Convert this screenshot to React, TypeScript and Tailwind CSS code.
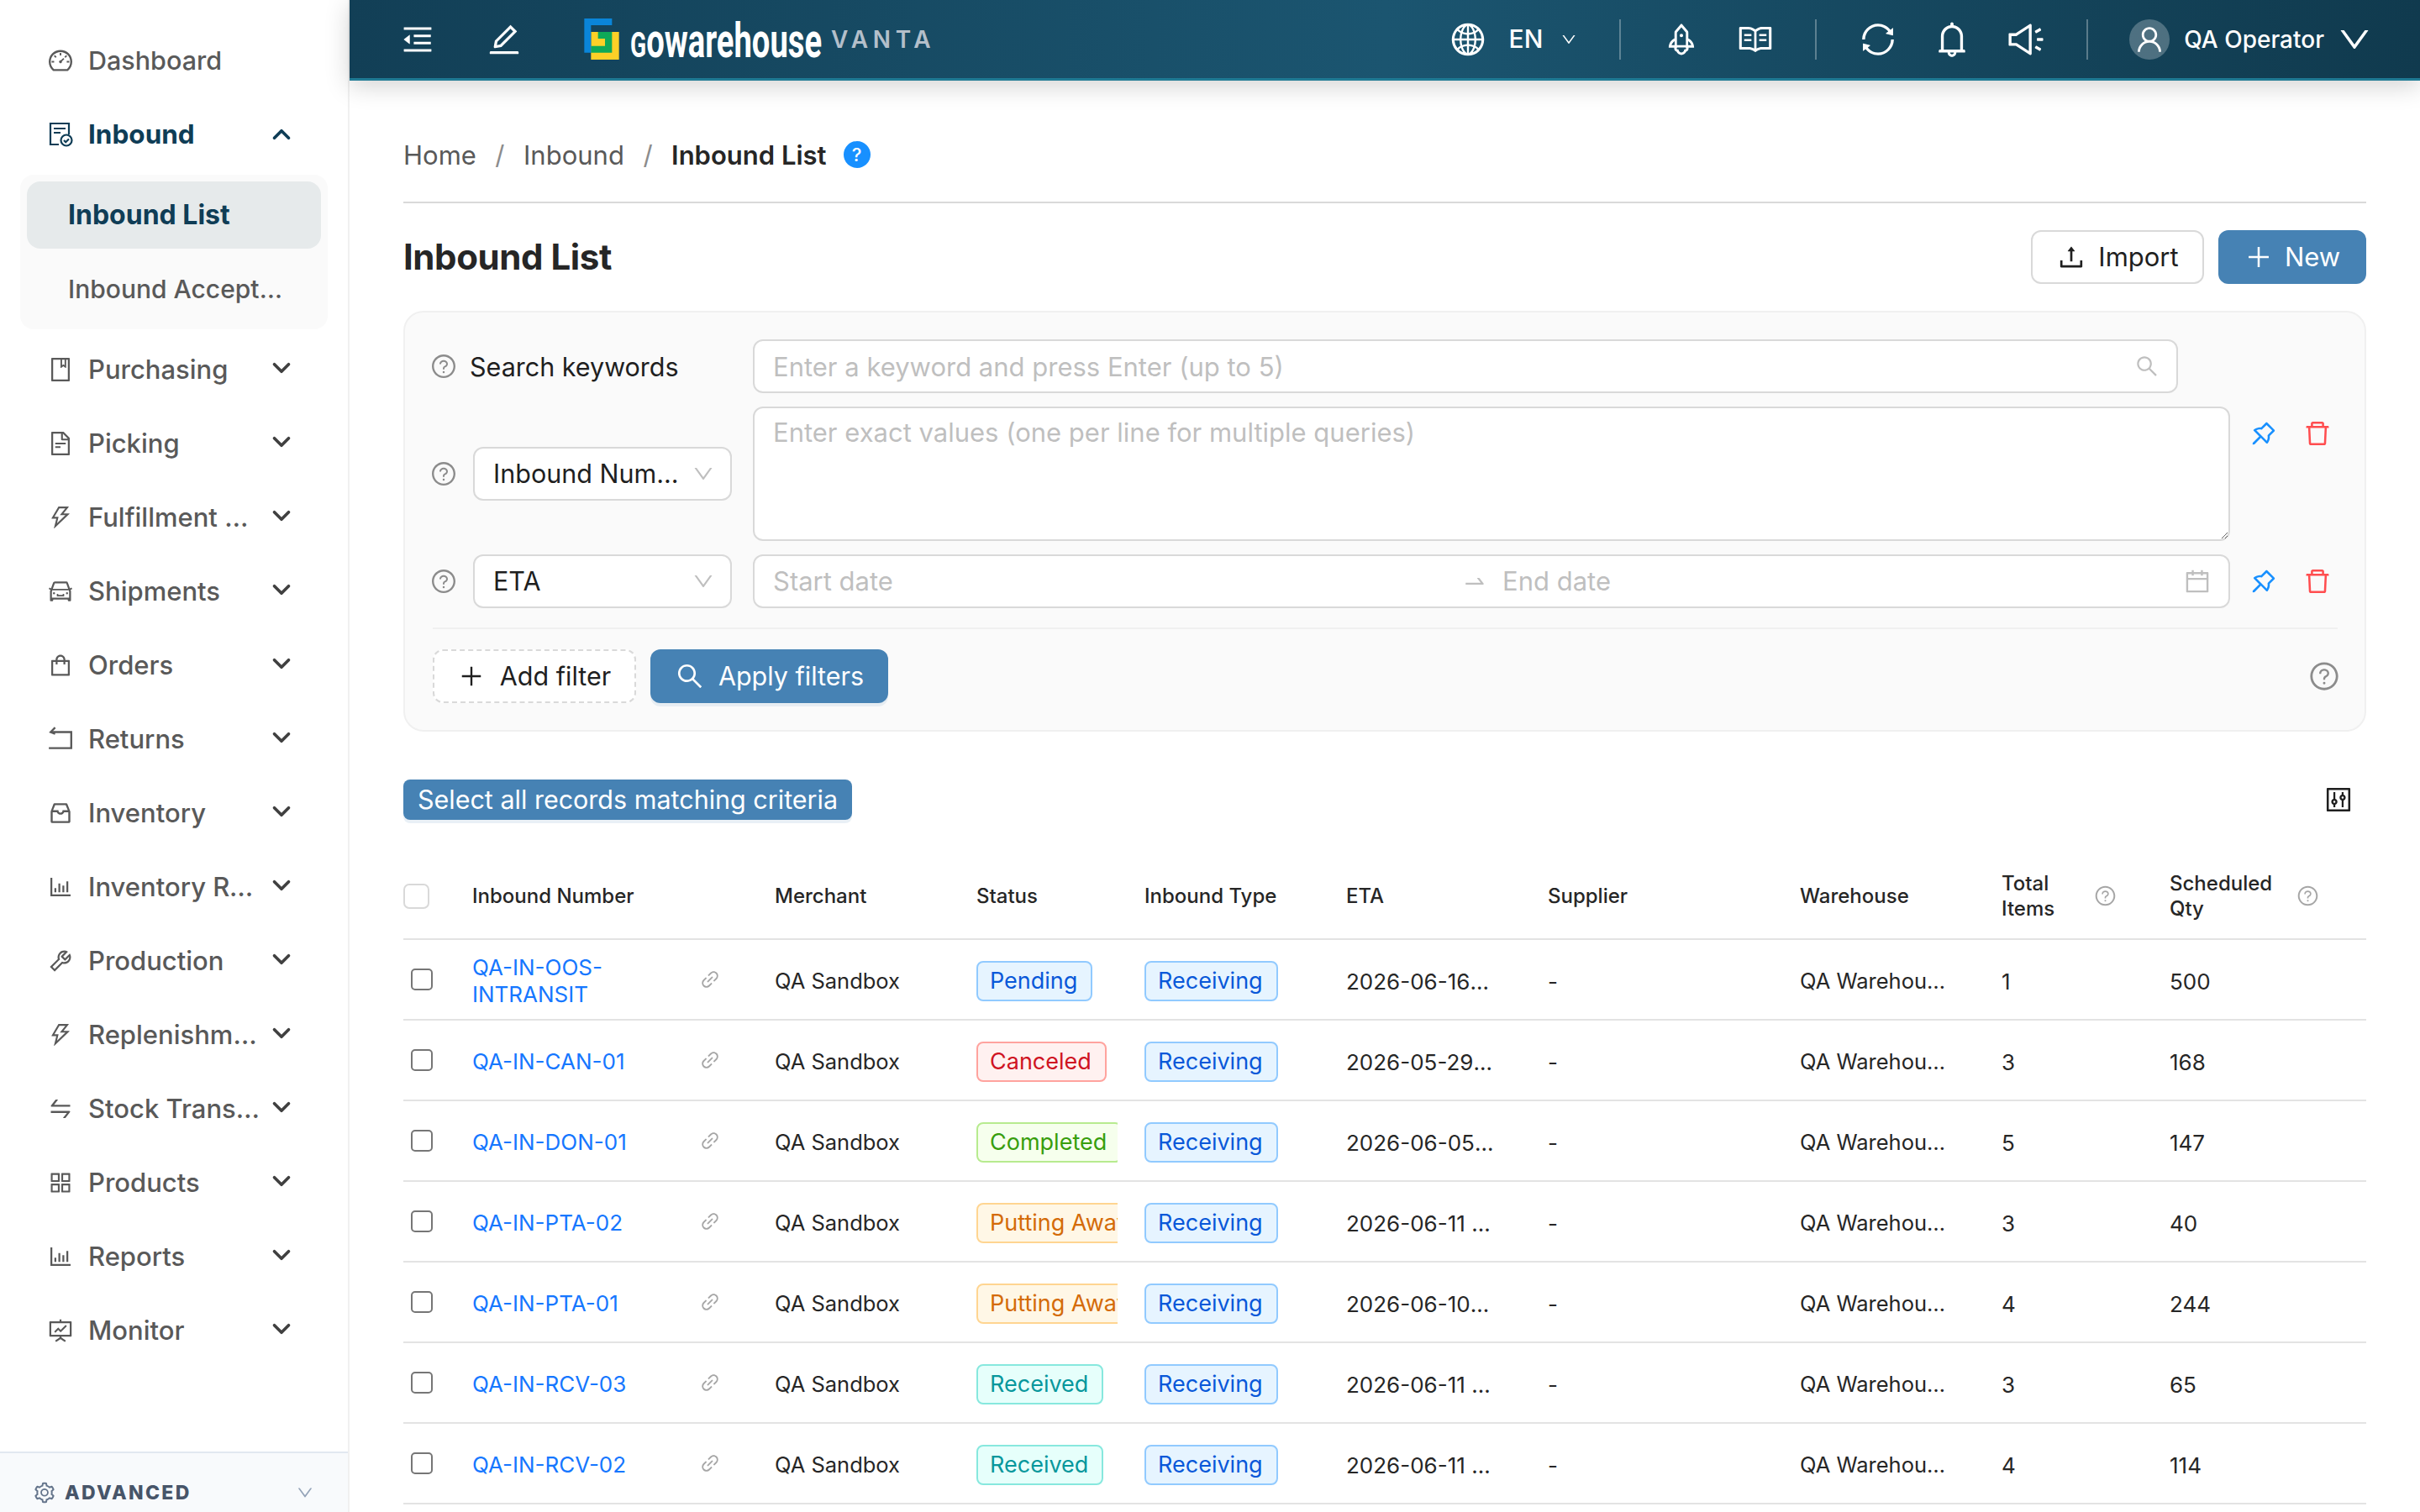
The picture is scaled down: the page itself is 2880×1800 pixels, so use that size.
import type { ComponentType, ReactNode } from "react";
import {
  AiOutlineAppstore,
  AiOutlineBarChart,
  AiOutlineBell,
  AiOutlineBook,
  AiOutlineCalendar,
  AiOutlineCar,
  AiOutlineControl,
  AiOutlineDashboard,
  AiOutlineDelete,
  AiOutlineDown,
  AiOutlineEdit,
  AiOutlineFileText,
  AiOutlineFundProjectionScreen,
  AiOutlineGlobal,
  AiOutlineInbox,
  AiOutlineLink,
  AiOutlineMenuFold,
  AiOutlinePlus,
  AiOutlinePushpin,
  AiOutlineQuestionCircle,
  AiOutlineRead,
  AiOutlineRocket,
  AiOutlineSearch,
  AiOutlineSetting,
  AiOutlineShopping,
  AiOutlineSound,
  AiOutlineSwap,
  AiOutlineSwapRight,
  AiOutlineSync,
  AiOutlineThunderbolt,
  AiOutlineTool,
  AiOutlineUpload,
  AiOutlineUser,
} from "react-icons/ai";
import { ChevronDown, ChevronUp } from "lucide-react";

type IconType = ComponentType<{ size?: number; className?: string }>;

function InboundIcon({ size = 30 }: { size?: number }) {
  return (
    <svg width={size} height={size} viewBox="0 0 30 30" fill="none" stroke="#0f3d56" strokeWidth="2.2">
      <path d="M13 27H3V2H25V15" />
      <path d="M7 8H21M7 13H15" />
      <circle cx="22" cy="22" r="6.5" />
      <path d="M19 22l2.2 2.2L25 20.5" />
    </svg>
  );
}

function ReturnsIcon({ size = 30 }: { size?: number }) {
  return (
    <svg width={size} height={size} viewBox="0 0 30 30" fill="none" stroke="currentColor" strokeWidth="2.2">
      <path d="M5 7H27V25H2" />
      <path d="M9 2L4 7L9 9" />
    </svg>
  );
}

const navItems: { label: string; icon: IconType }[] = [
  { label: "Purchasing", icon: AiOutlineBook },
  { label: "Picking", icon: AiOutlineFileText },
  { label: "Fulfillment Center", icon: AiOutlineThunderbolt },
  { label: "Shipments", icon: AiOutlineCar },
  { label: "Orders", icon: AiOutlineShopping },
  { label: "Returns", icon: ReturnsIcon },
  { label: "Inventory", icon: AiOutlineInbox },
  { label: "Inventory Reports", icon: AiOutlineBarChart },
  { label: "Production", icon: AiOutlineTool },
  { label: "Replenishment", icon: AiOutlineThunderbolt },
  { label: "Stock Transfer", icon: AiOutlineSwap },
  { label: "Products", icon: AiOutlineAppstore },
  { label: "Reports", icon: AiOutlineBarChart },
  { label: "Monitor", icon: AiOutlineFundProjectionScreen },
];

const statusStyles: Record<string, string> = {
  Pending: "border-[#91caff] bg-[#e6f4ff] text-[#0958d9]",
  Canceled: "border-[#ffa39e] bg-[#fff1f0] text-[#cf1322]",
  Completed: "border-[#b7eb8f] bg-[#f6ffed] text-[#389e0d]",
  "Putting Away": "border-[#ffd591] bg-[#fff7e6] text-[#d46b08]",
  Received: "border-[#87e8de] bg-[#e6fffb] text-[#08979c]",
};

const rows = [
  { no: "QA-IN-OOS-INTRANSIT", status: "Pending", eta: "2026-06-16 10:00:00", items: 1, qty: 500 },
  { no: "QA-IN-CAN-01", status: "Canceled", eta: "2026-05-29 10:00:00", items: 3, qty: 168 },
  { no: "QA-IN-DON-01", status: "Completed", eta: "2026-06-05 10:00:00", items: 5, qty: 147 },
  { no: "QA-IN-PTA-02", status: "Putting Away", eta: "2026-06-11 10:00:00", items: 3, qty: 40 },
  { no: "QA-IN-PTA-01", status: "Putting Away", eta: "2026-06-10 10:00:00", items: 4, qty: 244 },
  { no: "QA-IN-RCV-03", status: "Received", eta: "2026-06-11 10:00:00", items: 3, qty: 65 },
  { no: "QA-IN-RCV-02", status: "Received", eta: "2026-06-11 10:00:00", items: 4, qty: 114 },
];

function Logo() {
  return (
    <svg width="42" height="49" viewBox="48 28 124 147" className="shrink-0">
      <rect x="72" y="76" width="100" height="99" fill="#fdd027" />
      <path d="M97 76H147V150H72V126H122V100H97Z" fill="#0fa958" />
      <path d="M48 28H147V52H72V150H48Z" fill="#0a85d9" />
    </svg>
  );
}

function Sidebar() {
  return (
    <aside className="flex h-full w-[416px] shrink-0 flex-col border-r-2 border-[#f0f0f0] bg-white">
      <nav className="flex-1 pt-[32px] text-[#595959]">
        <div className="mb-[8px] flex h-[80px] items-center pl-[56px] text-[30.5px] font-medium">
          <span className="flex w-[32px] justify-center"><AiOutlineDashboard size={36} /></span>
          <span className="ml-[17px]">Dashboard</span>
        </div>
        <div className="mb-[8px] flex h-[80px] items-center pl-[56px] text-[31.5px] font-bold text-[#0f3d56]">
          <span className="flex w-[32px] justify-center"><InboundIcon /></span>
          <span className="ml-[17px] w-[206px]">Inbound</span>
          <ChevronUp size={34} strokeWidth={2.6} className="ml-[7px]" />
        </div>
        <div className="mx-[24px] mb-[8px] rounded-[16px] bg-[#fafafa] px-[8px] py-[8px]">
          <div className="mb-[8px] flex h-[80px] items-center rounded-[16px] bg-[#e6eaeb] pl-[49px] text-[32px] font-bold text-[#0f3d56]">
            Inbound List
          </div>
          <div className="flex h-[80px] items-center pl-[49px] text-[30px] font-medium">
            <span className="w-[256px] truncate">Inbound Acceptance</span>
          </div>
        </div>
        {navItems.map((item) => (
          <div key={item.label} className="mb-[8px] flex h-[80px] items-center pl-[56px] text-[31px] font-medium">
            <span className="flex w-[32px] justify-center"><item.icon size={34} /></span>
            <span className="ml-[17px] w-[206px] truncate">{item.label}</span>
            <ChevronDown size={34} strokeWidth={2.6} className="-mt-[4px] ml-[7px] text-[#404040]" />
          </div>
        ))}
      </nav>
      <div className="flex h-[72px] items-center border-t-2 border-[#e2e8f0] bg-[#f8fafc] pl-[39px] pr-[40px] pt-[24px] text-[#64748b]">
        <AiOutlineSetting size={28} />
        <span className="ml-[10px] flex-1 text-[23px] font-extrabold tracking-[0.1em] text-[#475569]">ADVANCED</span>
        <AiOutlineDown size={22} className="text-[#94a3b8]" />
      </div>
    </aside>
  );
}

function Divider() {
  return <span className="h-[48px] w-[2px] shrink-0 bg-white/30" />;
}

function Header() {
  return (
    <header className="relative z-10 flex h-[96px] shrink-0 items-center border-b-[3px] border-[#1f7a94] bg-linear-to-r from-[#123f56] via-[#1b5570] to-[#103a4e] text-white shadow-[0_6px_28px_rgba(0,0,0,0.18)]">
      <AiOutlineMenuFold size={42} className="ml-[60px] shrink-0" />
      <AiOutlineEdit size={44} className="ml-[60px] shrink-0" />
      <div className="ml-[73px] shrink-0"><Logo /></div>
      <span className="ml-[13px] mt-[4px] w-[226px] shrink-0 origin-left scale-x-[0.67] whitespace-nowrap font-['Roboto',sans-serif] text-[57px] font-bold leading-none">
        <span className="text-[42px]">G</span>owarehouse
      </span>
      <span className="ml-[13px] shrink-0 text-[28px] font-semibold tracking-[0.2em] text-[#b4bfca]">VANTA</span>
      <div className="flex-1" />
      <AiOutlineGlobal size={44} className="shrink-0" />
      <span className="ml-[27px] text-[30px] font-medium">EN</span>
      <AiOutlineDown size={20} className="ml-[21px] shrink-0" />
      <div className="ml-[50px] flex items-center"><Divider /></div>
      <AiOutlineRocket size={44} className="ml-[50px] shrink-0" />
      <AiOutlineRead size={44} className="ml-[44px] shrink-0" />
      <div className="ml-[49px] flex items-center"><Divider /></div>
      <AiOutlineSync size={46} className="ml-[50px] shrink-0" />
      <AiOutlineBell size={48} className="ml-[41px] shrink-0" />
      <AiOutlineSound size={48} className="ml-[40px] shrink-0" />
      <div className="ml-[48px] flex items-center"><Divider /></div>
      <span className="ml-[49px] flex h-[48px] w-[48px] shrink-0 items-center justify-center rounded-full bg-white/25">
        <AiOutlineUser size={38} />
      </span>
      <span className="ml-[17px] text-[28px] font-medium">QA Operator</span>
      <AiOutlineDown size={44} className="ml-[14px] mr-[56px] shrink-0" />
    </header>
  );
}

function Box({ className, children }: { className: string; children: ReactNode }) {
  return (
    <div className={`flex items-center rounded-[12px] border-2 border-[#d9d9d9] bg-white ${className}`}>{children}</div>
  );
}

function RowActions() {
  return (
    <div className="ml-[22px] flex h-[64px] items-center">
      <AiOutlinePushpin size={36} className="text-[#1890ff]" />
      <AiOutlineDelete size={36} className="ml-[28px] text-[#ff4d4f]" />
    </div>
  );
}

function HelpIcon() {
  return <AiOutlineQuestionCircle size={32} className="-ml-[3px] shrink-0 text-[#8c8c8c]" />;
}

function FilterPanel() {
  return (
    <section className="mt-[32px] rounded-[24px] border-2 border-[#f0f0f0] bg-[#fafafa] pb-[32px] pl-[33px] pr-[32px] pt-[32px] text-[30.5px] text-[#1f1f1f]">
      <div className="flex items-center">
        <HelpIcon />
        <span className="ml-[15px] w-[337px] pt-[2px]">Search keywords</span>
        <Box className="h-[64px] w-[1696px] pl-[22px] pr-[20px]">
          <input
            className="min-w-0 flex-1 bg-transparent pt-[2px] text-[31px] outline-none placeholder:text-[#bfbfbf]"
            placeholder="Enter a keyword and press Enter (up to 5)"
          />
          <AiOutlineSearch size={30} className="text-[#bfbfbf]" />
        </Box>
      </div>
      <div className="mt-[16px] flex">
        <div className="flex h-[160px] items-center">
          <HelpIcon />
          <Box className="ml-[19px] h-[64px] w-[308px] pl-[22px] pr-[18px]">
            <span className="flex-1">Inbound Num...</span>
            <AiOutlineDown size={28} className="text-[#bfbfbf]" />
          </Box>
        </div>
        <textarea
          className="ml-[25px] h-[160px] w-[1758px] rounded-[12px] border-2 border-[#d9d9d9] bg-white px-[22px] py-[6px] text-[31px] outline-none placeholder:text-[#bfbfbf]"
          placeholder="Enter exact values (one per line for multiple queries)"
        />
        <RowActions />
      </div>
      <div className="mt-[16px] flex items-center">
        <HelpIcon />
        <Box className="ml-[19px] h-[64px] w-[308px] pl-[22px] pr-[18px]">
          <span className="flex-1">ETA</span>
          <AiOutlineDown size={28} className="text-[#bfbfbf]" />
        </Box>
        <Box className="ml-[25px] h-[64px] w-[1758px] pl-[22px] pr-[20px] text-[31px] text-[#bfbfbf]">
          <span className="w-[820px]">Start date</span>
          <AiOutlineSwapRight size={30} />
          <span className="ml-[18px] flex-1">End date</span>
          <AiOutlineCalendar size={34} />
        </Box>
        <RowActions />
      </div>
      <div className="mt-[23px] border-t-2 border-[#f0f0f0] pt-[24px]">
        <div className="flex items-center">
          <button className="flex h-[64px] w-[242px] items-center justify-center rounded-[12px] border-2 border-dashed border-[#d9d9d9] bg-white">
            <AiOutlinePlus size={32} />
            <span className="ml-[18px]">Add filter</span>
          </button>
          <button className="ml-[17px] flex h-[64px] w-[283px] items-center justify-center rounded-[12px] bg-[#4682b4] text-white shadow-[0_4px_0_rgba(70,130,180,0.1)]">
            <AiOutlineSearch size={36} />
            <span className="ml-[16px]">Apply filters</span>
          </button>
          <div className="flex-1" />
          <AiOutlineQuestionCircle size={38} className="-mr-[3px] text-[#8c8c8c]" />
        </div>
      </div>
    </section>
  );
}

function HeadCell({ className = "", children }: { className?: string; children: ReactNode }) {
  return <th className={`h-[102px] px-[16px] text-left align-middle text-[24px] font-medium leading-[30px] text-[#262626] ${className}`}>{children}</th>;
}

function Table() {
  return (
    <table className="mt-[40px] w-[2336px] table-fixed border-collapse text-[26px] text-[#262626]">
      <colgroup>
        <col className="w-[66px]" />
        <col className="w-[360px]" />
        <col className="w-[240px]" />
        <col className="w-[200px]" />
        <col className="w-[240px]" />
        <col className="w-[240px]" />
        <col className="w-[300px]" />
        <col className="w-[240px]" />
        <col className="w-[200px]" />
        <col className="w-[250px]" />
      </colgroup>
      <thead>
        <tr className="border-b-2 border-[#e3e3e3]">
          <th className="text-left align-middle">
            <span className="block h-[30px] w-[31px] rounded-[7px] border-2 border-[#d9d9d9] bg-white" />
          </th>
          <HeadCell>Inbound Number</HeadCell>
          <HeadCell>Merchant</HeadCell>
          <HeadCell>Status</HeadCell>
          <HeadCell>Inbound Type</HeadCell>
          <HeadCell>ETA</HeadCell>
          <HeadCell>Supplier</HeadCell>
          <HeadCell>Warehouse</HeadCell>
          <HeadCell>
            <div className="flex items-center">
              <span className="w-[110px]">Total Items</span>
              <AiOutlineQuestionCircle size={27} className="text-[#a6a6a6]" />
            </div>
          </HeadCell>
          <HeadCell>
            <div className="flex items-center">
              <span className="w-[151px]">Scheduled Qty</span>
              <AiOutlineQuestionCircle size={27} className="text-[#a6a6a6]" />
            </div>
          </HeadCell>
        </tr>
      </thead>
      <tbody>
        {rows.map((row) => (
          <tr key={row.no} className="h-[96px] border-b-2 border-[#e3e3e3]">
            <td className="pl-[9px]">
              <span className="block h-[26px] w-[26px] rounded-[5px] border-2 border-[#767676] bg-white" />
            </td>
            <td className="px-[16px]">
              <div className="flex items-center">
                <a className="w-[270px] pt-[4px] leading-[32px] text-[#1677ff]">{row.no}</a>
                <AiOutlineLink size={26} className="text-[#a6a6a6]" />
              </div>
            </td>
            <td className="px-[16px] pt-[4px] text-[25.5px]">QA Sandbox</td>
            <td className="px-[16px] pt-[4px]">
              <div className="overflow-hidden">
                <span className={`inline-flex h-[48px] items-center whitespace-nowrap rounded-[8px] border-2 pl-[14px] pr-[16px] text-[27px] ${statusStyles[row.status]}`}>
                  {row.status}
                </span>
              </div>
            </td>
            <td className="px-[16px] pt-[4px]">
              <span className="inline-flex h-[48px] items-center rounded-[8px] border-2 border-[#91caff] bg-[#e6f4ff] pl-[14px] pr-[16px] text-[27px] text-[#0958d9]">
                Receiving
              </span>
            </td>
            <td className="px-[16px] pt-[4px]">
              <div className="w-[176px] truncate">{row.eta}</div>
            </td>
            <td className="px-[16px] pt-[4px]">-</td>
            <td className="px-[16px] pt-[4px] text-[25.5px]">
              <div className="w-[180px] truncate">QA Warehouse Main</div>
            </td>
            <td className="px-[16px] pt-[4px]">{row.items}</td>
            <td className="px-[16px] pt-[4px]">{row.qty}</td>
          </tr>
        ))}
      </tbody>
    </table>
  );
}

export default function App() {
  return (
    <div className="flex h-screen w-full overflow-hidden bg-white font-['Inter',sans-serif]">
      <Sidebar />
      <div className="flex min-w-0 flex-1 flex-col">
        <Header />
        <main className="px-[64px] pt-[56px]">
          <div className="flex h-[90px] items-start border-b-2 border-[#d9d9d9] pt-[10px] text-[31px] text-[#595959]">
            <span>Home</span>
            <span className="mx-[22.5px] text-[#8c8c8c]">/</span>
            <span>Inbound</span>
            <span className="mx-[22.5px] text-[#8c8c8c]">/</span>
            <span className="font-semibold text-[#262626]">Inbound List</span>
            <span className="ml-[20px] mt-[6px] flex h-[32px] w-[32px] items-center justify-center rounded-full bg-[#1890ff] text-[22px] font-medium text-white">?</span>
          </div>
          <div className="mt-[32px] flex h-[64px] items-center">
            <h1 className="flex-1 text-[42px] font-bold leading-none tracking-[-0.01em] text-[#262626]">Inbound List</h1>
            <button className="flex h-[64px] w-[206px] items-center justify-center rounded-[12px] border-2 border-[#d9d9d9] bg-white text-[31px] text-[#1f1f1f]">
              <AiOutlineUpload size={36} />
              <span className="ml-[14px]">Import</span>
            </button>
            <button className="ml-[17px] flex h-[64px] w-[176px] items-center justify-center rounded-[12px] bg-[#4682b4] text-[31px] text-white">
              <AiOutlinePlus size={34} />
              <span className="ml-[14px]">New</span>
            </button>
          </div>
          <FilterPanel />
          <div className="mt-[57px] flex h-[48px] items-center">
            <button className="flex h-[48px] w-[534px] items-center justify-center whitespace-nowrap rounded-[8px] bg-[#4682b4] text-[30.5px] text-white shadow-[0_4px_0_rgba(70,130,180,0.12)]">
              Select all records matching criteria
            </button>
            <div className="flex-1" />
            <AiOutlineControl size={36} className="mr-[15px] text-[#1f1f1f]" />
          </div>
          <Table />
        </main>
      </div>
    </div>
  );
}
